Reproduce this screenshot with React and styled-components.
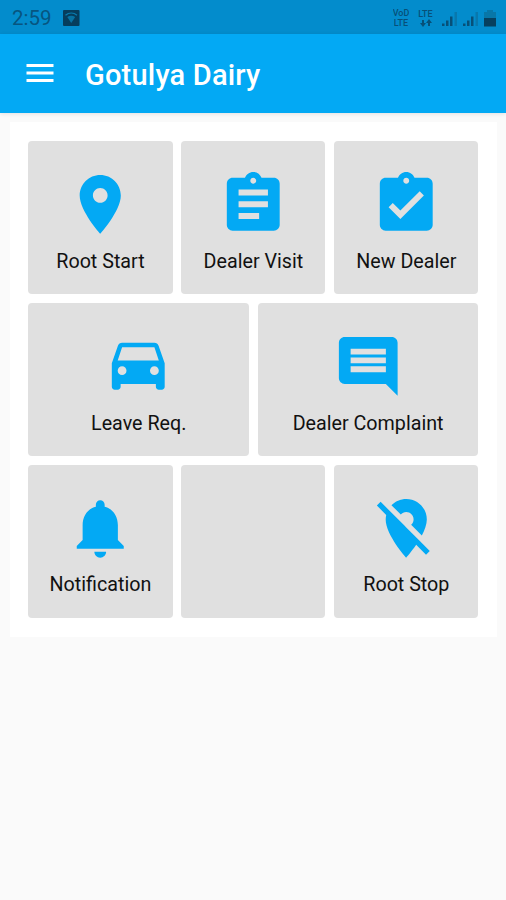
import React from "react";
import styled, { createGlobalStyle } from "styled-components";

const icons = {
  place:
    "M12 2C8.13 2 5 5.13 5 9c0 5.25 7 13 7 13s7-7.75 7-13c0-3.87-3.13-7-7-7zm0 9.5c-1.38 0-2.5-1.12-2.5-2.5s1.12-2.5 2.5-2.5 2.5 1.12 2.5 2.5-1.12 2.5-2.5 2.5z",
  assignment:
    "M19 3h-4.18C14.4 1.84 13.3 1 12 1c-1.3 0-2.4.84-2.82 2H5c-1.1 0-2 .9-2 2v14c0 1.1.9 2 2 2h14c1.1 0 2-.9 2-2V5c0-1.1-.9-2-2-2zm-7 0c.55 0 1 .45 1 1s-.45 1-1 1-1-.45-1-1 .45-1 1-1zm2 14H7v-2h7v2zm3-4H7v-2h10v2zm0-4H7V7h10v2z",
  assignmentDone:
    "M19 3h-4.18C14.4 1.84 13.3 1 12 1c-1.3 0-2.4.84-2.82 2H5c-1.1 0-2 .9-2 2v14c0 1.1.9 2 2 2h14c1.1 0 2-.9 2-2V5c0-1.1-.9-2-2-2zm-7 0c.55 0 1 .45 1 1s-.45 1-1 1-1-.45-1-1 .45-1 1-1zm-2 14l-4-4 1.41-1.41L10 14.17l6.59-6.59L18 9l-8 8z",
  car:
    "M18.92 5.01C18.72 4.42 18.16 4 17.5 4h-11c-.66 0-1.21.42-1.42 1.01L3 11v8c0 .55.45 1 1 1h1c.55 0 1-.45 1-1v-1h12v1c0 .55.45 1 1 1h1c.55 0 1-.45 1-1v-8l-2.08-5.99zM6.5 15c-.83 0-1.5-.67-1.5-1.5S5.67 12 6.5 12s1.5.67 1.5 1.5S7.33 15 6.5 15zm11 0c-.83 0-1.5-.67-1.5-1.5s.67-1.5 1.5-1.5 1.5.67 1.5 1.5-.67 1.5-1.5 1.5zM5 10l1.5-4.5h11L19 10H5z",
  comment:
    "M21.99 4c0-1.1-.89-2-1.99-2H4c-1.1 0-2 .9-2 2v12c0 1.1.9 2 2 2h14l4 4-.01-18zM18 14H6v-2h12v2zm0-3H6V9h12v2zm0-3H6V6h12v2z",
  bell:
    "M12 22c1.1 0 2-.9 2-2h-4c0 1.1.89 2 2 2zm6-6v-5c0-3.07-1.64-5.64-4.5-6.32V4c0-.83-.67-1.5-1.5-1.5s-1.5.67-1.5 1.5v.68C7.63 5.36 6 7.92 6 11v5l-2 2v1h16v-1l-2-2z",
  placeOff:
    "M12 6.5c1.38 0 2.5 1.12 2.5 2.5 0 .74-.33 1.39-.83 1.85l3.63 3.63c.98-1.86 1.7-3.8 1.7-5.48 0-3.87-3.13-7-7-7-1.98 0-3.76.83-5.04 2.15l3.19 3.19c.46-.52 1.11-.84 1.85-.84zm4.37 9.6l-4.63-4.63-.11-.11L3.27 3 2 4.27l3.18 3.18C5.07 7.95 5 8.47 5 9c0 5.25 7 13 7 13s1.67-1.85 3.38-4.35L18.73 21 20 19.73l-3.63-3.63z"
};

const tiles = [
  { label: "Root Start", icon: "place", span: 6 },
  { label: "Dealer Visit", icon: "assignment", span: 6 },
  { label: "New Dealer", icon: "assignmentDone", span: 6 },
  { label: "Leave Req.", icon: "car", span: 9 },
  { label: "Dealer Complaint", icon: "comment", span: 9 },
  { label: "Notification", icon: "bell", span: 6 },
  { label: "", icon: null, span: 6 },
  { label: "Root Stop", icon: "placeOff", span: 6 }
];

const Signal = () => (
  <svg width="16" height="17" viewBox="0 0 16 17">
    <path d="M0 13.5h2.5V16H0zM4 10.5h2.5V16H4zM8 6.5h2.5V16H8z" fill="#075078" />
    <path d="M12.5 2H15v14h-2.5z" fill="#0878ad" />
  </svg>
);

const App = () => {
  return (
    <Screen>
      <GlobalStyle />
      <StatusBar>
        <Clock>2:59</Clock>
        <svg width="17" height="16" viewBox="0 0 17 16">
          <rect width="16.5" height="16" rx="1" fill="#063d5c" />
          <path
            d="M2.5 5.2c3.4-2.8 8.1-2.8 11.5 0"
            fill="none"
            stroke="#087caf"
            strokeWidth="1.3"
          />
          <path d="M4.3 7c2.3-1.8 5.6-1.8 7.9 0L8.25 13z" fill="#0772a2" />
        </svg>
        <StatusIcons>
          <Network $width={16}>
            <span>VoD</span>
            <span>LTE</span>
          </Network>
          <Network $width={17}>
            <span>LTE</span>
            <svg width="12" height="8" viewBox="0 0 12 8">
              <path
                d="M2 1h2v3h2L3 8 0 4h2zM8 7h2V4h2L9 0 6 4h2z"
                fill="#075078"
              />
            </svg>
          </Network>
          <Signal />
          <Signal />
          <svg width="12" height="17" viewBox="0 0 12 17">
            <path d="M3 0h6v2h3v6H0V2h3z" fill="#0877a8" />
            <path d="M0 8h12v8.5H0z" fill="#07405f" />
          </svg>
        </StatusIcons>
      </StatusBar>
      <Toolbar>
        <MenuIcon viewBox="0 0 24 24">
          <path d="M3 18h18v-2H3v2zm0-5h18v-2H3v2zm0-7v2h18V6H3z" />
        </MenuIcon>
        <Title>Gotulya Dairy</Title>
      </Toolbar>
      <Panel>
        {tiles.map((tile, i) => (
          <Tile key={i} $span={tile.span}>
            {tile.icon && (
              <TileIcon viewBox="0 0 24 24">
                <path d={icons[tile.icon]} />
              </TileIcon>
            )}
            {tile.label && <TileLabel>{tile.label}</TileLabel>}
          </Tile>
        ))}
      </Panel>
    </Screen>
  );
};

const GlobalStyle = createGlobalStyle`
  * {
    box-sizing: border-box;
  }

  body {
    margin: 0;
    background: #fafafa;
    font-family: Roboto, "Liberation Sans", sans-serif;
  }
`;

const Screen = styled.div`
  width: 506px;
  height: 900px;
  overflow: hidden;
  background: #fafafa;
`;

const StatusBar = styled.div`
  height: 34px;
  padding: 2px 10px 0 12px;
  display: flex;
  align-items: center;
  background: #038ccc;
`;

const Clock = styled.span`
  width: 51px;
  font-size: 20.5px;
  line-height: 24px;
  color: #075580;
`;

const StatusIcons = styled.div`
  margin-left: auto;
  display: flex;
  align-items: center;
  gap: 5px;
`;

const Network = styled.div`
  width: ${props => props.$width}px;
  margin-right: 3px;
  display: flex;
  flex-direction: column;
  align-items: center;
  font-size: 9px;
  font-weight: 500;
  line-height: 10px;
  color: #075078;

  span {
    height: 10px;
    overflow: hidden;
  }
`;

const Toolbar = styled.div`
  height: 79px;
  padding: 0 22px;
  display: flex;
  align-items: center;
  background: #03a9f4;
  box-shadow: 0 1px 4px rgba(0, 0, 0, 0.1);
`;

const MenuIcon = styled.svg`
  width: 36px;
  height: 36px;
  margin: -1px 27px 0 0;
  fill: white;
`;

const Title = styled.h1`
  margin: 3px 0 0;
  font-size: 29px;
  font-weight: 500;
  line-height: 36px;
  letter-spacing: 0.2px;
  color: white;
  white-space: nowrap;
`;

const Panel = styled.div`
  width: 487px;
  margin: 9px 0 0 10px;
  padding: 19px 18.6px 19px 18.4px;
  display: grid;
  grid-template-columns: repeat(18, 1fr);
  grid-auto-rows: 153px;
  row-gap: 8.8px;
  column-gap: 8.8px;
  background: white;
`;

const Tile = styled.div`
  grid-column: span ${props => props.$span};
  padding-top: 28px;
  display: flex;
  flex-direction: column;
  align-items: center;
  background: #e0e0e0;
  border-radius: 4px;
`;

const TileIcon = styled.svg`
  width: 70.5px;
  height: 70.5px;
  fill: #03a9f4;
`;

const TileLabel = styled.div`
  margin-top: 10.3px;
  font-size: 19.7px;
  line-height: 24px;
  color: #111;
  white-space: nowrap;
`;

export default App;
